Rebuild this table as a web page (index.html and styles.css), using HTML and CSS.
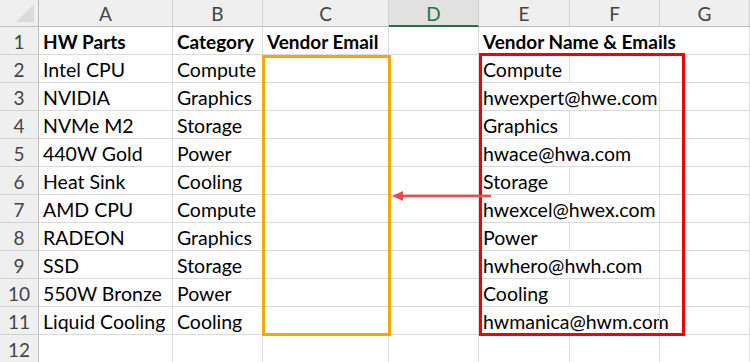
FILE: index.html
```html
<!DOCTYPE html>
<html>
<head>
<meta charset="utf-8">
<link rel="stylesheet" href="styles.css">
</head>
<body>
<div class="sheet">
  <div class="grid">
    <div class="ch corner"><span class="tri"></span></div>
    <div class="ch">A</div><div class="ch">B</div><div class="ch">C</div><div class="ch active">D</div><div class="ch">E</div><div class="ch">F</div><div class="ch">G</div>

    <div class="rh">1</div><div class="c b">HW Parts</div><div class="c b">Category</div><div class="c b">Vendor Email</div><div class="c"></div><div class="c b ov">Vendor Name &amp; Emails</div><div class="c ov"></div><div class="c"></div>
    <div class="rh">2</div><div class="c">Intel CPU</div><div class="c">Compute</div><div class="c"></div><div class="c"></div><div class="c">Compute</div><div class="c"></div><div class="c"></div>
    <div class="rh">3</div><div class="c">NVIDIA</div><div class="c">Graphics</div><div class="c"></div><div class="c"></div><div class="c ov">hwexpert@hwe.com</div><div class="c"></div><div class="c"></div>
    <div class="rh">4</div><div class="c">NVMe M2</div><div class="c">Storage</div><div class="c"></div><div class="c"></div><div class="c">Graphics</div><div class="c"></div><div class="c"></div>
    <div class="rh">5</div><div class="c">440W Gold</div><div class="c">Power</div><div class="c"></div><div class="c"></div><div class="c ov">hwace@hwa.com</div><div class="c"></div><div class="c"></div>
    <div class="rh">6</div><div class="c">Heat Sink</div><div class="c">Cooling</div><div class="c"></div><div class="c"></div><div class="c">Storage</div><div class="c"></div><div class="c"></div>
    <div class="rh">7</div><div class="c">AMD CPU</div><div class="c">Compute</div><div class="c"></div><div class="c"></div><div class="c ov">hwexcel@hwex.com</div><div class="c"></div><div class="c"></div>
    <div class="rh">8</div><div class="c">RADEON</div><div class="c">Graphics</div><div class="c"></div><div class="c"></div><div class="c">Power</div><div class="c"></div><div class="c"></div>
    <div class="rh">9</div><div class="c">SSD</div><div class="c">Storage</div><div class="c"></div><div class="c"></div><div class="c ov">hwhero@hwh.com</div><div class="c"></div><div class="c"></div>
    <div class="rh">10</div><div class="c">550W Bronze</div><div class="c">Power</div><div class="c"></div><div class="c"></div><div class="c">Cooling</div><div class="c"></div><div class="c"></div>
    <div class="rh">11</div><div class="c">Liquid Cooling</div><div class="c">Cooling</div><div class="c"></div><div class="c"></div><div class="c ov">hwmanica@hwm.com</div><div class="c"></div><div class="c"></div>
    <div class="rh">12</div><div class="c"></div><div class="c"></div><div class="c"></div><div class="c"></div><div class="c"></div><div class="c"></div><div class="c"></div>
  </div>
  <div class="box orange"></div>
  <div class="box red"></div>
  <svg class="arrow" width="100" height="14" viewBox="0 0 100 14">
    <line x1="10" y1="7" x2="100" y2="7" stroke="#f04a4a" stroke-width="2.6"/>
    <polygon points="1,7 12,2 12,12" fill="#f04a4a"/>
  </svg>
</div>
</body>
</html>
```

FILE: styles.css
```css
html, body {
  margin: 0;
  padding: 0;
  background: #fff;
  overflow: hidden;
}
.sheet {
  position: relative;
  width: 750px;
  height: 362px;
  overflow: hidden;
  font-family: Lato, "Open Sans", sans-serif;
}
.grid {
  display: grid;
  grid-template-columns: 39px 134px 90px 126px 90px 91px 90px 90px;
  grid-template-rows: 27px repeat(12, 28px);
}
.ch {
  background: #efefef;
  border-right: 1px solid #d0d0d0;
  border-bottom: 1px solid #bdbdbd;
  box-sizing: border-box;
  display: flex;
  align-items: center;
  justify-content: center;
  font-size: 19px;
  color: #444;
  padding-top: 1px;
}
.ch.corner {
  position: relative;
  border-right: 1px solid #bdbdbd;
}
.ch.corner .tri {
  position: absolute;
  right: 4px;
  bottom: 4px;
  width: 0;
  height: 0;
  border-left: 18px solid transparent;
  border-bottom: 18px solid #dadada;
}
.ch.active {
  background: #e1e1e1;
  color: #217346;
  border-bottom: 2px solid #217346;
}
.rh {
  background: #efefef;
  border-right: 1px solid #bdbdbd;
  border-bottom: 1px solid #d0d0d0;
  box-sizing: border-box;
  display: flex;
  align-items: center;
  justify-content: center;
  font-size: 19px;
  color: #444;
  padding-top: 2px;
}
.c {
  border-right: 1px solid #dadada;
  border-bottom: 1px solid #dadada;
  box-sizing: border-box;
  display: flex;
  align-items: flex-end;
  padding: 0 0 1px 4px;
  font-size: 19.5px;
  color: #000;
  white-space: nowrap;
  overflow: visible;
  line-height: 22px;
  min-width: 0;
}
.c.b {
  font-weight: bold;
  font-size: 19px;
}
.c.ov {
  border-right-color: transparent;
}
.box {
  position: absolute;
  box-sizing: border-box;
  border: 3px solid;
}
.orange {
  left: 262px;
  top: 55px;
  width: 129px;
  height: 281px;
  border-color: #f5a800;
}
.red {
  left: 479px;
  top: 53px;
  width: 206px;
  height: 283px;
  border-color: #f20000;
}
.arrow {
  position: absolute;
  left: 391px;
  top: 189px;
}
```
